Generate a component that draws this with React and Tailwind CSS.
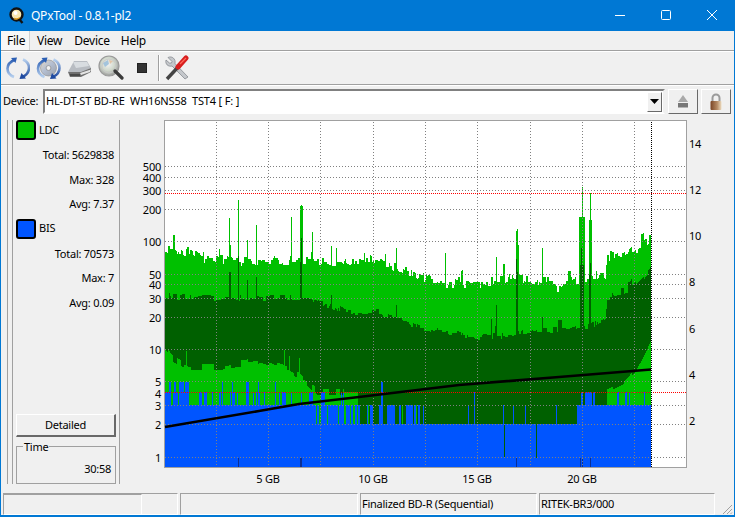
import { useId } from "react";

const FONT = "font-['Noto_Sans','Open_Sans',sans-serif]";
const LIGHT = "#00c000";
const DARK = "#006000";
const BLUE = "#0055ff";

const X0 = 166;
const X_END = 652;
const BOTTOM = 467;

function rng(seed) {
  let a = seed;
  return () => {
    a |= 0;
    a = (a + 0x6d2b79f5) | 0;
    let t = Math.imul(a ^ (a >>> 15), 1 | a);
    t = (t + Math.imul(t ^ (t >>> 7), 61 | t)) ^ t;
    return ((t ^ (t >>> 14)) >>> 0) / 4294967296;
  };
}

function lerp(points, x) {
  for (let i = 1; i < points.length; i++) {
    if (x <= points[i][0]) {
      const [x1, y1] = points[i - 1];
      const [x2, y2] = points[i];
      return y1 + ((y2 - y1) * (x - x1)) / (x2 - x1);
    }
  }
  return points[points.length - 1][1];
}

const topLine = [[166, 248], [180, 250], [200, 255], [240, 262], [300, 260], [350, 263], [370, 260], [400, 268], [430, 280], [460, 285], [490, 282], [520, 278], [560, 283], [578, 281], [600, 278], [606, 276], [608, 257], [630, 250], [652, 238]];
const darkTop = [[166, 296], [240, 298], [300, 298], [349, 312], [370, 311], [400, 317], [420, 328], [440, 332], [480, 337], [530, 333], [540, 330], [575, 329], [600, 322], [606, 318], [608, 297], [630, 292], [636, 285], [652, 268]];
const darkBottom = [[166, 350], [175, 360], [190, 367], [220, 367], [250, 362], [262, 360], [285, 368], [300, 376], [318, 392], [358, 392], [360, 424], [606, 424], [608, 392], [625, 384], [636, 372], [645, 355], [652, 340]];

const lightSpikes = { 230: 218, 239: 200, 231: 245, 248: 240, 257: 225, 292: 217, 301: 206, 302: 205, 303: 206, 313: 232, 332: 246, 397: 248, 446: 253, 497: 257, 517: 231, 518: 229, 519: 245, 543: 248, 580: 217, 581: 217, 582: 217, 583: 187, 584: 217, 585: 217, 591: 193, 590: 220, 592: 220 };
const darkSpikes = { 230: 272, 231: 272, 239: 256, 248: 280, 257: 277, 302: 238, 301: 262, 332: 295, 397: 305, 492: 319, 497: 305, 517: 259, 518: 272, 543: 317, 581: 265, 582: 248, 583: 265, 584: 265, 591: 263, 590: 275 };
const darkLinesLow = [505, 537];
const darkBlueLow = [[239, 1], [301, 2], [517, 1], [581, 1], [583, 1], [591, 1]];

function buildLayers() {
  const rand = rng(41);
  const light = [];
  const dark = [];
  const blue = [];
  const midGreen = [];
  let holdTop = 0;
  let holdDark = 0;
  let holdLow = 0;
  let holdBlue = 405;
  let runTop = 0;
  let runDark = 0;
  let runLow = 0;
  let runBlue = 0;
  for (let x = X0; x < X_END; x++) {
    // values are held for a few pixels so the bars read as plateaus
    if (runTop-- <= 0) {
      holdTop = (rand() - 0.5) * 10;
      if (rand() < 0.05) holdTop -= 8 + rand() * 8;
      if (rand() < 0.03) holdTop += 6;
      runTop = Math.floor(rand() * 3);
    }
    if (runDark-- <= 0) {
      holdDark = (rand() - 0.5) * 7;
      if (rand() < 0.04) holdDark -= 7;
      runDark = Math.floor(rand() * 4);
    }
    if (runLow-- <= 0) {
      holdLow = Math.floor(rand() * 3) * 3 - 3;
      runLow = 2 + Math.floor(rand() * 5);
    }
    const top = lightSpikes[x] ?? lerp(topLine, x) + holdTop;
    const dTop = darkSpikes[x] ?? lerp(darkTop, x) + holdDark;
    light.push(`M${x} ${top.toFixed(0)}V${BOTTOM}`);
    const dBottom = lerp(darkBottom, x) + (x < 345 || x > 606 ? holdLow : 0);
    dark.push(`M${x} ${dTop.toFixed(0)}V${dBottom.toFixed(0)}`);

    // blue base with spikes and gaps
    if (runBlue-- <= 0) {
      const r = rand();
      runBlue = Math.floor(rand() * 2);
      if (x < 190) holdBlue = r < 0.6 ? 382 : r < 0.85 ? 392 : 405;
      else if (x < 305) {
        holdBlue = r < 0.24 ? 392 : r < 0.28 ? 382 : 405;
        runBlue = 0;
      } else if (x < 345) holdBlue = r < 0.3 ? 392 : r < 0.5 ? 424 : 405;
      else if (x < 420) {
        holdBlue = r < 0.42 ? 405 : r < 0.45 ? 382 : 424;
      } else if (x < 578) {
        holdBlue = r < 0.06 ? 405 : r < 0.08 ? 392 : 424;
        runBlue = 0;
      } else {
        holdBlue = r < 0.25 ? 392 : r < 0.27 ? 381 : 405;
      }
    }
    blue.push(`M${x} ${holdBlue}V${BOTTOM}`);
    if (x < 345 && rand() < 0.06) midGreen.push(`M${x} 405V424`);
    if (x > 345 && x < 420 && rand() < 0.04) midGreen.push(`M${x} 405V424`);
    if (x > 178 && x < 310 && rand() < 0.04) midGreen.push(`M${x} ${(dBottom - 15).toFixed(0)}V${dBottom.toFixed(0)}`);
  }
  return {
    light: light.join(""),
    dark: dark.join(""),
    blue: blue.join(""),
    midGreen: midGreen.join(""),
  };
}

const layers = buildLayers();

const gridX = [217, 269, 321, 374, 426, 478, 531, 583, 635];
const gridY = [166, 177, 190, 209, 241, 274, 284, 298, 317, 349, 381, 405, 424, 457];
const leftLabels = [[500, 167], [400, 178], [300, 191], [200, 210], [100, 242], [50, 275], [40, 285], [30, 299], [20, 318], [10, 350], [5, 382], [4, 394], [3, 406], [2, 425], [1, 458]];
const rightLabels = [[14, 144], [12, 190], [10, 236], [8, 282], [6, 329], [4, 375], [2, 421]];
const bottomLabels = [["5 GB", 269], ["10 GB", 374], ["15 GB", 478], ["20 GB", 583]];

function Chart() {
  return (
    <svg width="613" height="373" viewBox="121 117 613 373" className="shrink-0" fontSize="11" fill="#000">
      <rect x="165.5" y="120.5" width="522" height="347" fill="#fff" stroke="#a0a0a0" strokeWidth="1" shapeRendering="crispEdges" />
      <g strokeWidth="1" shapeRendering="crispEdges" fill="none">
        <path d={layers.light} stroke={LIGHT} />
        <path d={layers.dark} stroke={DARK} />
        <path d={layers.midGreen} stroke={LIGHT} />
        <path d={layers.blue} stroke={BLUE} />
        {darkLinesLow.map((x) => (
          <path key={x} d={`M${x} 424V458`} stroke={DARK} />
        ))}
        {darkBlueLow.map(([x, w]) => (
          <rect key={x} x={x} y="458" width={w} height="9" fill="#0a2f96" stroke="none" />
        ))}
      </g>
      <g strokeWidth="1" fill="none">
        {gridX.map((x) => (
          <path key={x} d={`M${x + 0.5} 122V467`} stroke="#808080" strokeDasharray="1 2" />
        ))}
        {gridY.map((y) => (
          <path key={y} d={`M166 ${y + 0.5}H687`} stroke="#808080" strokeDasharray="1 2" />
        ))}
        <path d="M166 193.5H687M166 392.5H687" stroke="#ff0000" strokeDasharray="1 1" />
        <path d={`M${X_END + 0.5} 122V467`} stroke="#000" strokeDasharray="1 1" />
      </g>
      <polyline points="166,427 260,411 300,404 360,397 460,385 560,377 652,369.5" fill="none" stroke="#000" strokeWidth="2.6" />
      {leftLabels.map(([v, y]) => (
        <text key={v} x="162" y={y} dy="4" textAnchor="end">{v}</text>
      ))}
      {rightLabels.map(([v, y]) => (
        <text key={v} x="690" y={y} dy="4">{v}</text>
      ))}
      {bottomLabels.map(([t, x]) => (
        <text key={t} x={x} y="483" textAnchor="middle">{t}</text>
      ))}
    </svg>
  );
}

function ArrowsArc({ id }) {
  return (
    <g fill="none" strokeLinecap="butt">
      <defs>
        <linearGradient id={`${id}a`} x1="0" y1="0" x2="0" y2="1">
          <stop offset="0" stopColor="#2c5fb4" />
          <stop offset="1" stopColor="#b5cfee" />
        </linearGradient>
        <linearGradient id={`${id}b`} x1="0" y1="0" x2="0" y2="1">
          <stop offset="0" stopColor="#b5cfee" />
          <stop offset="1" stopColor="#1f4aa0" />
        </linearGradient>
      </defs>
      <path d="M9 3.5C3.5 6 1.5 10 1.5 12.5C1.5 16 4 19.5 8 21" stroke={`url(#${id}a)`} strokeWidth="2.6" />
      <path d="M5 2L11 1.5L9.5 7Z" fill="#2c5fb4" />
      <path d="M16 21C21 19 23 15 23 12C23 8 20.5 5 17 3.5" stroke={`url(#${id}b)`} strokeWidth="2.6" />
      <path d="M20 22.5L13.5 23L15.5 17Z" fill="#1f4aa0" />
    </g>
  );
}

function RefreshIcon() {
  const id = useId();
  return (
    <svg width="24" height="24" viewBox="0 0 24 24" className="shrink-0">
      <ArrowsArc id={id} />
    </svg>
  );
}

function DiscRefreshIcon() {
  const id = useId();
  return (
    <svg width="25" height="24" viewBox="0 0 24 24" className="shrink-0">
      <defs>
        <linearGradient id={`${id}d`} x1="0" y1="0" x2="1" y2="1">
          <stop offset="0" stopColor="#e7d9c4" />
          <stop offset="0.45" stopColor="#b4bfd2" />
          <stop offset="1" stopColor="#9aa0aa" />
        </linearGradient>
      </defs>
      <circle cx="12" cy="12" r="8" fill={`url(#${id}d)`} stroke="#8d8d8d" strokeWidth="0.6" />
      <circle cx="12" cy="12" r="2.4" fill="#f0f0f0" stroke="#777" strokeWidth="0.6" />
      <ArrowsArc id={id} />
    </svg>
  );
}

function DriveIcon() {
  return (
    <svg width="25" height="22" viewBox="0 0 25 22" className="shrink-0">
      <path d="M1 15L7 4H20L24 11L14 16Z" fill="#b8bcc2" />
      <path d="M6 5H20L22 9L9 11Z" fill="#d8dce0" />
      <path d="M1 15L14 15L24 11V15L14 20H3Z" fill="#6f6f6f" />
      <path d="M13 16L24 12.5L23 15L14 18Z" fill="#e4e4e4" />
      <path d="M3 18H13" stroke="#3c3c3c" strokeWidth="1.5" />
    </svg>
  );
}

function SearchDiscIcon() {
  const id = useId();
  return (
    <svg width="26" height="26" viewBox="0 0 26 26" className="shrink-0">
      <defs>
        <radialGradient id={`${id}g`} cx="0.45" cy="0.4" r="0.65">
          <stop offset="0" stopColor="#f4f4f4" />
          <stop offset="0.5" stopColor="#d0d8cc" />
          <stop offset="1" stopColor="#8f8f8f" />
        </radialGradient>
      </defs>
      <circle cx="11" cy="11" r="10" fill={`url(#${id}g)`} stroke="#9a9a9a" strokeWidth="1.2" />
      <path d="M5 8L10 5L11 9L7 12Z" fill="#a4c4dc" />
      <path d="M11 5L15 6L12 9Z" fill="#e2c4a8" />
      <circle cx="11" cy="11" r="7" fill="none" stroke="#c9c9c9" strokeWidth="1" />
      <path d="M17 16L24 23" stroke="#3b3b3b" strokeWidth="3.2" strokeLinecap="round" />
    </svg>
  );
}

function ToolsIcon() {
  return (
    <svg width="25" height="26" viewBox="0 0 25 26" className="shrink-0">
      <path d="M3 2.5L7 6.5L6.5 8L4.5 8L1 5C0 9 3 12 7 11L20 24L23 22L10 8.5C11 4 7 0.5 3 2.5Z" fill="#c4c7cb" stroke="#7d8186" strokeWidth="0.7" />
      <path d="M2 24L15 10" stroke="#444" strokeWidth="3.4" />
      <path d="M13 12L21 3" stroke="#d81e1e" strokeWidth="5" strokeLinecap="round" />
      <path d="M15 9L21 3" stroke="#ff6a5a" strokeWidth="1.2" />
    </svg>
  );
}

function QLogo() {
  return (
    <svg width="16" height="17" viewBox="0 0 16 17" className="shrink-0">
      <circle cx="7.5" cy="7.5" r="6" fill="#f7e6b0" stroke="#111" strokeWidth="2.4" />
      <circle cx="6.5" cy="6" r="2" fill="#fff" />
      <path d="M5 11.5Q8 13 11 10.5" stroke="#d89a20" strokeWidth="1.6" fill="none" />
      <path d="M10 12L13.5 16" stroke="#111" strokeWidth="2.4" />
    </svg>
  );
}

function Stat({ children }) {
  return <div className="h-[24.5px] flex items-center justify-end pr-[2px]">{children}</div>;
}

function Legend({ color, label }) {
  return (
    <div className="flex items-center gap-[3px] h-[20px]">
      <span className={`w-[20px] h-[20px] rounded-[3px] border-2 border-black ${color}`} />
      <span>{label}</span>
    </div>
  );
}

function StatusCell({ className, children }) {
  return (
    <div className={`h-[22px] flex items-center pl-[1px] border-t border-l border-t-[#a0a0a0] border-l-[#a0a0a0] border-r border-b border-r-white border-b-white ${className}`}>
      {children}
    </div>
  );
}

export default function App() {
  return (
    <div className={`${FONT} w-[735px] h-[517px] flex flex-col bg-[#f0f0f0] text-black text-[11px] tracking-[-0.25px] overflow-hidden border-x border-b-2 border-[#0078d4]`}>
      {/* Title bar */}
      <div className="h-[31px] shrink-0 bg-[#0078d4] text-white flex items-center pl-[9px] -mx-px">
        <QLogo />
        <span className="ml-[6px] text-[12px]">QPxTool - 0.8.1-pl2</span>
        <div className="ml-auto flex items-center">
          <svg width="46" height="31" viewBox="0 0 46 31" fill="none" stroke="#fff">
            <path d="M18 15.5H28" />
          </svg>
          <svg width="46" height="31" viewBox="0 0 46 31" fill="none" stroke="#fff">
            <rect x="18.5" y="10.5" width="9" height="9" rx="1" />
          </svg>
          <svg width="46" height="31" viewBox="0 0 46 31" fill="none" stroke="#fff">
            <path d="M18 10L28 20M28 10L18 20" />
          </svg>
        </div>
      </div>

      {/* Menu */}
      <div className="h-[20px] shrink-0 flex items-center border-b border-[#a0a0a0] text-[12px]">
        <span className="w-[29px] h-[19px] flex items-center pl-[6px] bg-[#f7f7f7] border-r border-[#d0d0d0]">File</span>
        <span className="ml-[7px]">View</span>
        <span className="ml-[12px]">Device</span>
        <span className="ml-[11px]">Help</span>
      </div>

      {/* Toolbar */}
      <div className="h-[34px] shrink-0 flex items-center pl-[5px] border-t border-t-white border-b border-[#a0a0a0]">
        <RefreshIcon />
        <span className="w-[6px]" />
        <DiscRefreshIcon />
        <span className="w-[6px]" />
        <DriveIcon />
        <span className="w-[6px]" />
        <SearchDiscIcon />
        <span className="ml-[13px] w-[10px] h-[10px] bg-[#333] border border-[#222]" />
        <span className="ml-[11px] w-[2px] h-[26px] border-l border-l-[#a0a0a0] border-r border-r-white" />
        <span className="w-[5px]" />
        <ToolsIcon />
      </div>

      {/* Device row */}
      <div className="h-[32px] shrink-0 flex items-center border-t border-white pl-[2px]">
        <span className="w-[40px]">Device:</span>
        <div className="w-[622px] h-[25px] flex items-center justify-between pl-[1px] pr-[1px] bg-white border-2 border-t-[#808080] border-l-[#808080] border-r-[#f0f0f0] border-b-white">
          <span className="whitespace-pre tracking-[-0.17px]">HL-DT-ST BD-RE  WH16NS58  TST4 [ F: ]</span>
          <span className="w-[15px] h-[20px] flex items-center justify-center bg-[#f0f0f0] border-t border-l border-white border-r border-b border-r-[#696969] border-b-[#696969]">
            <svg width="9" height="5" viewBox="0 0 9 5"><path d="M0 0H9L4.5 5Z" fill="#000" /></svg>
          </span>
        </div>
        <button className="ml-[3px] w-[30px] h-[25px] flex items-center justify-center border border-t-white border-l-white border-r-[#696969] border-b-[#696969]">
          <svg width="12" height="13" viewBox="0 0 12 13">
            <path d="M6 0L11 7H1Z" fill="#a9a9a9" />
            <rect x="1" y="8" width="10" height="4.5" fill="#777" />
          </svg>
        </button>
        <button className="ml-[3px] w-[30px] h-[25px] flex items-center justify-center border border-t-white border-l-white border-r-[#696969] border-b-[#696969]">
          <svg width="14" height="18" viewBox="0 0 14 18">
            <defs>
              <linearGradient id="lockBody" x1="0" y1="0" x2="1" y2="0">
                <stop offset="0" stopColor="#7a4526" />
                <stop offset="0.6" stopColor="#b58a64" />
                <stop offset="1" stopColor="#eddcc0" />
              </linearGradient>
            </defs>
            <path d="M3.5 9V5a3.5 3.5 0 0 1 7 0V9" fill="none" stroke="#9a9a9a" strokeWidth="2" />
            <rect x="1.5" y="8" width="11" height="9" rx="1" fill="url(#lockBody)" />
          </svg>
        </button>
      </div>

      {/* Main */}
      <div className="h-[373px] shrink-0 flex">
        <div className="ml-[6px] mt-[3px] h-[364px] w-[6px] border-x border-[#a0a0a0]" />
        <div className="mt-[3px] h-[364px] w-[107px] border-r border-[#a0a0a0] pl-[3px] pr-[3px] flex flex-col">
          <Legend color="bg-[#00c000]" label="LDC" />
          <div className="h-[3px]" />
          <Stat>Total: 5629838</Stat>
          <Stat>Max: 328</Stat>
          <Stat>Avg: 7.37</Stat>
          <div className="h-[2px]" />
          <Legend color="bg-[#0055ff]" label="BIS" />
          <div className="h-[3px]" />
          <Stat>Total: 70573</Stat>
          <Stat>Max: 7</Stat>
          <Stat>Avg: 0.09</Stat>
          <button className="mt-auto h-[23px] w-[100px] flex items-center justify-center border border-t-white border-l-white border-r-[#696969] border-b-[#696969] border-b-2 border-r-2">
            Detailed
          </button>
          <fieldset className="mt-[4px] h-[43px] w-[100px] border border-[#a0a0a0]">
            <legend className="ml-[6px] px-[1px] leading-[11px]">Time</legend>
            <div className="text-right pr-[4px] pt-[9px] leading-[16px]">30:58</div>
          </fieldset>
        </div>
        <Chart />
      </div>

      {/* Status bar */}
      <div className="mt-[3px] h-[22px] shrink-0 flex items-start pl-[2px] relative">
        <StatusCell className="w-[175px] !pl-0">
          <div className="w-[138px] h-full border-t border-t-[#a0a0a0] border-r border-r-white" />
        </StatusCell>
        <StatusCell className="ml-[2px] w-[178px]" />
        <StatusCell className="ml-[2px] w-[177px]">Finalized BD-R (Sequential)</StatusCell>
        <StatusCell className="ml-[2px] w-[176px]">RITEK-BR3/000</StatusCell>
        <svg width="11" height="11" viewBox="0 0 11 11" className="absolute right-[1px] bottom-0" stroke="#a0a0a0" fill="none">
          <path d="M10 1L1 10M10 5L5 10M10 8.5L8.5 10" />
        </svg>
      </div>
    </div>
  );
}
